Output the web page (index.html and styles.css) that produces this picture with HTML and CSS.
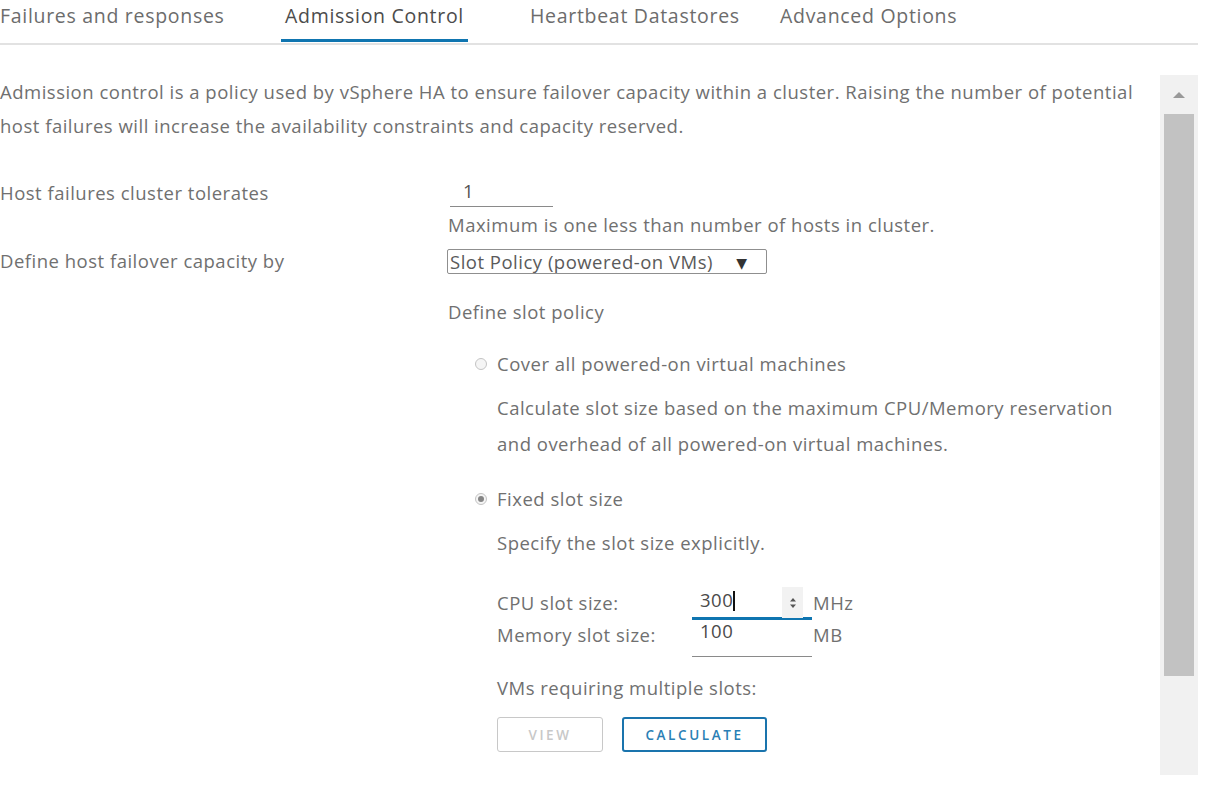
FILE: index.html
```html
<!DOCTYPE html>
<html lang="en">
<head>
    <meta charset="UTF-8">
    <title>vSphere HA - Admission Control</title>
    <link rel="stylesheet" href="styles.css">
</head>
<body>
    <nav class="tabs">
        <span class="tab"><span class="tab-label">Failures and responses</span></span>
        <span class="tab active"><span class="tab-label">Admission Control</span></span>
        <span class="tab"><span class="tab-label">Heartbeat Datastores</span></span>
        <span class="tab"><span class="tab-label">Advanced Options</span></span>
    </nav>

    <div class="panel">
        <div class="content">
            <p class="intro">Admission control is a policy used by vSphere HA to ensure failover capacity within a cluster. Raising the number of potential host failures will increase the availability constraints and capacity reserved.</p>

            <div class="form-row">
                <div class="label">Host failures cluster tolerates</div>
                <div class="value">
                    <div class="line-input small">1</div>
                    <div class="hint">Maximum is one less than number of hosts in cluster.</div>
                </div>
            </div>

            <div class="form-row">
                <div class="label">Define host failover capacity by</div>
                <div class="value">
                    <div class="select">Slot Policy (powered-on VMs) <span class="caret">&#9660;</span></div>
                    <div class="sub-title">Define slot policy</div>

                    <div class="options">
                        <div class="radio-row">
                            <span class="radio"></span>
                            <span>Cover all powered-on virtual machines</span>
                        </div>
                        <p class="option-desc">Calculate slot size based on the maximum CPU/Memory reservation<br>and overhead of all powered-on virtual machines.</p>

                        <div class="radio-row">
                            <span class="radio checked"></span>
                            <span>Fixed slot size</span>
                        </div>
                        <p class="option-desc">Specify the slot size explicitly.</p>

                        <div class="slot-grid">
                            <span class="slot-label">CPU slot size:</span>
                            <div class="num-input focused">
                                <span class="num-value">300<span class="cursor"></span></span>
                                <span class="spinner">
                                    <svg width="8" height="14" viewBox="0 0 8 14"><path d="M1 5.5 L4 2 L7 5.5 Z M1 8.5 L4 12 L7 8.5 Z" fill="#555"/></svg>
                                </span>
                            </div>
                            <span class="unit">MHz</span>

                            <span class="slot-label">Memory slot size:</span>
                            <div class="num-input"><span class="num-value">100</span></div>
                            <span class="unit">MB</span>
                        </div>

                        <div class="multi-label">VMs requiring multiple slots:</div>
                        <div class="buttons">
                            <button class="btn" disabled>VIEW</button>
                            <button class="btn primary">CALCULATE</button>
                        </div>
                    </div>
                </div>
            </div>
        </div>

        <div class="scrollbar">
            <div class="scroll-arrow"></div>
            <div class="scroll-thumb"></div>
        </div>
    </div>
</body>
</html>
```

FILE: styles.css
```css
body {
    margin: 0;
    font-family: "Open Sans", "DejaVu Sans", sans-serif;
    font-size: 18.5px;
    letter-spacing: 0.5px;
    color: #707070;
    background-color: #fff;
}

/* tab strip */
.tabs {
    display: flex;
    width: 1198px;
    height: 43px;
    border-bottom: 2px solid #e2e2e2;
    font-size: 19.5px;
    letter-spacing: 0.7px;
}
.tab {
    display: flex;
    align-items: flex-start;
    color: #6c6c6c;
}
.tab:nth-child(1) { width: 281px; }
.tab:nth-child(2) { width: 245px; }
.tab:nth-child(3) { width: 250px; }
.tab-label {
    display: block;
    height: 42px;
    padding: 4px 4px 0 4px;
    line-height: 24px;
    box-sizing: border-box;
}
.tab:first-child .tab-label {
    padding-left: 0;
}
.tab.active .tab-label {
    color: #4c4c4c;
    border-bottom: 3px solid #0f75b0;
}

/* content + scrollbar */
.panel {
    display: flex;
    width: 1198px;
    margin-top: 30px;
}
.content {
    flex: 1;
}
.intro {
    margin: 0 0 33px 0;
    line-height: 34px;
}

.form-row {
    display: flex;
}
.label {
    width: 448px;
    flex-shrink: 0;
    line-height: 34px;
}
.value {
    flex: 1;
}

.line-input {
    line-height: 30px;
    border-bottom: 1px solid #8a8a8a;
    padding-left: 13px;
    color: #555;
}
.line-input.small {
    width: 90px;
    margin-left: 2px;
}
.hint {
    line-height: 34px;
    margin: 1px 0 2px 0;
}

.select {
    display: inline-block;
    width: 320px;
    height: 25px;
    line-height: 23px;
    box-sizing: border-box;
    border: 1px solid #8f8f8f;
    border-radius: 2px;
    padding-left: 2px;
    color: #5a5a5a;
    margin: 5px 0 0 -1px;
    white-space: nowrap;
}
.caret {
    font-size: 14px;
    color: #333;
    margin-left: 18px;
    vertical-align: 1px;
}
.sub-title {
    margin-top: 26px;
    line-height: 24px;
}

.options {
    padding-left: 49px;
    padding-top: 25px;
}
.radio-row {
    display: flex;
    align-items: center;
    gap: 10px;
    line-height: 30px;
}
.radio-row .radio {
    margin-left: -22px;
}
.radio {
    width: 10px;
    height: 10px;
    border: 1px solid #c4c4c4;
    border-radius: 50%;
    background: #f5f5f5;
    position: relative;
}
.radio.checked::after {
    content: "";
    position: absolute;
    left: 2px;
    top: 2px;
    width: 6px;
    height: 6px;
    border-radius: 50%;
    background: #858585;
}
.option-desc {
    margin: 11px 0 22px 0;
    line-height: 36px;
}

/* margin collapses with the paragraph above */
.slot-grid {
    display: grid;
    grid-template-columns: 195px 120px auto;
    align-items: start;
    margin-top: 27px;
}
.slot-label,
.unit {
    line-height: 30px;
}
.unit {
    padding-left: 1px;
}
.num-input {
    display: flex;
    justify-content: space-between;
    align-items: flex-start;
    padding: 0 0 14px 8px;
    border-bottom: 1px solid #8a8a8a;
    color: #4a4a4a;
}
.num-value {
    line-height: 22px;
}
.num-input.focused {
    height: 29px;
    padding: 0 9px 0 8px;
    border-bottom: 3px solid #0f75b0;
}
.num-input.focused .num-value {
    line-height: 24px;
}
.cursor {
    display: inline-block;
    width: 2px;
    height: 20px;
    background: #111;
    vertical-align: -4px;
}
.spinner {
    display: flex;
    align-items: center;
    justify-content: center;
    width: 21px;
    height: 31px;
    margin-top: -1px;
    background: #f2f2f2;
}

.multi-label {
    margin-top: 16px;
    line-height: 30px;
}
.buttons {
    display: flex;
    gap: 19px;
    margin-top: 14px;
}
.btn {
    height: 35px;
    border: 1px solid #c8c8c8;
    border-radius: 3px;
    background: #fff;
    font-family: "Open Sans", "DejaVu Sans", sans-serif;
    font-size: 13.5px;
    font-weight: 600;
    letter-spacing: 2.6px;
    color: #c8c8c8;
    width: 106px;
    padding: 0;
}
.btn.primary {
    width: 145px;
    border: 2px solid #1a74ad;
    color: #2a7fb5;
}

.scrollbar {
    width: 38px;
    height: 700px;
    background: #f1f1f1;
    display: flex;
    flex-direction: column;
    align-items: center;
}
.scroll-arrow {
    width: 0;
    height: 0;
    border-left: 6px solid transparent;
    border-right: 6px solid transparent;
    border-bottom: 6px solid #999;
    margin: 17px 0 16px 0;
}
.scroll-thumb {
    width: 30px;
    height: 562px;
    background: #c2c2c2;
}
```
